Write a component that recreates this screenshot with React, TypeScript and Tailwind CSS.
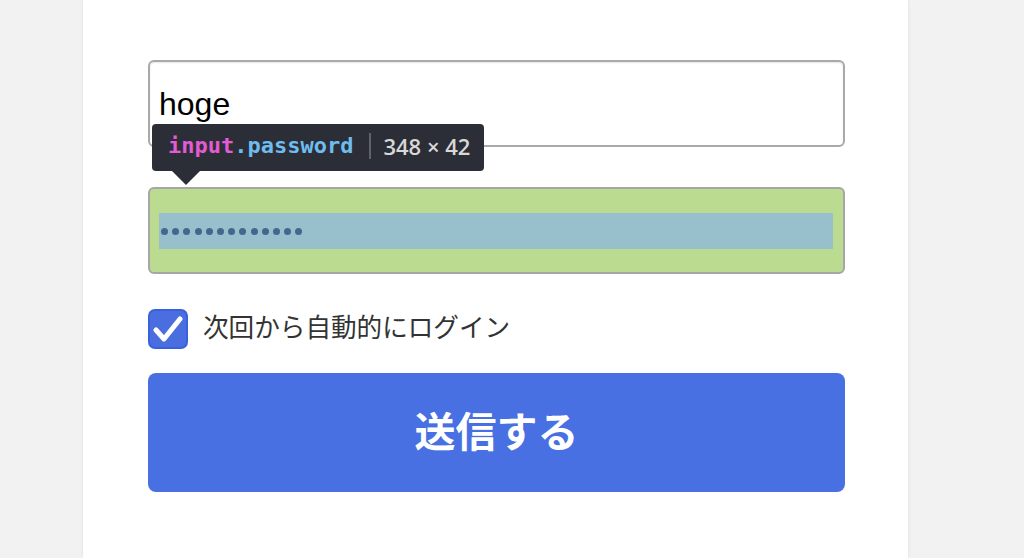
import React from "react";

export default function App() {
  return (
    <div className="w-[1024px] h-[558px] bg-[#f2f2f2] overflow-hidden flex">
      <div className="ml-[83px] w-[825px] h-full bg-white shadow-[0_0_4px_rgba(0,0,0,0.08)] pl-[65px] pt-[60px]">
        <div className="relative w-[697px] flex flex-col">
          {/* username input */}
          <div className="h-[87px] rounded-[6px] border-2 border-[#a9a9a9] bg-white flex items-center pl-[9px] shadow-[inset_0_1px_2px_rgba(0,0,0,0.1)]">
            <span className="text-[32px] leading-none text-black" style={{ fontFamily: '"Liberation Sans", Arial, sans-serif' }}>
              hoge
            </span>
          </div>

          {/* password input (highlighted) */}
          <div className="mt-[40px] h-[87px] rounded-[6px] border-2 border-[#a6a6a6] bg-[#bbdb91] pl-[9px] pr-[10px] pt-[24px]">
            <div className="h-[36px] bg-[#97bfcc] flex items-center pl-[2px] gap-[4.2px]">
              {Array.from({ length: 13 }).map((_, i) => (
                <span key={i} className="block w-[7px] h-[7px] rounded-full bg-[#45668f]" />
              ))}
            </div>
          </div>

          {/* tooltip */}
          <div className="absolute left-[4px] top-[64px] h-[47px] w-[332px] rounded-[4px] bg-[#2b2e37] flex items-center pl-[16px] pb-[3px]">
            <span
              className="text-[22px] font-bold leading-none"
              style={{ fontFamily: '"DejaVu Sans Mono", monospace' }}
            >
              <span className="text-[#e35bd3]">input</span>
              <span className="text-[#6fbdef]">.password</span>
            </span>
            <span className="ml-[16px] mr-[12px] w-[2px] h-[26px] bg-[#5f626a]" />
            <span
              className="text-[22px] text-[#d8d8d8] leading-none font-semibold"
              style={{ fontFamily: '"Open Sans", "DejaVu Sans", sans-serif' }}
            >
              348 × 42
            </span>
            <span className="absolute left-[19px] top-[46px] w-0 h-0 border-l-[15px] border-r-[15px] border-t-[15px] border-l-transparent border-r-transparent border-t-[#2b2e37]" />
          </div>

          {/* checkbox row */}
          <div className="mt-[35px] flex items-center">
            <div className="w-[40px] h-[40px] rounded-[7px] bg-[#4a6ee0] border-2 border-[#3862dc] flex items-center justify-center">
              <svg width="30" height="28" viewBox="0 0 30 28">
                <path d="M3 15 L11 24 L27 4" fill="none" stroke="white" strokeWidth="5" strokeLinecap="round" strokeLinejoin="round" />
              </svg>
            </div>
            <span
              className="ml-[15px] text-[25.6px] leading-none text-[#333] relative -top-[3px]"
              style={{ fontFamily: '"Noto Sans CJK JP", sans-serif' }}
            >
              次回から自動的にログイン
            </span>
          </div>

          {/* submit button */}
          <div className="mt-[24px] h-[119px] rounded-[8px] bg-[#4870e2] flex items-center justify-center pb-[7px]">
            <span
              className="text-[41px] font-bold text-white leading-none"
              style={{ fontFamily: '"Noto Sans CJK JP", sans-serif' }}
            >
              送信する
            </span>
          </div>
        </div>
      </div>
    </div>
  );
}
